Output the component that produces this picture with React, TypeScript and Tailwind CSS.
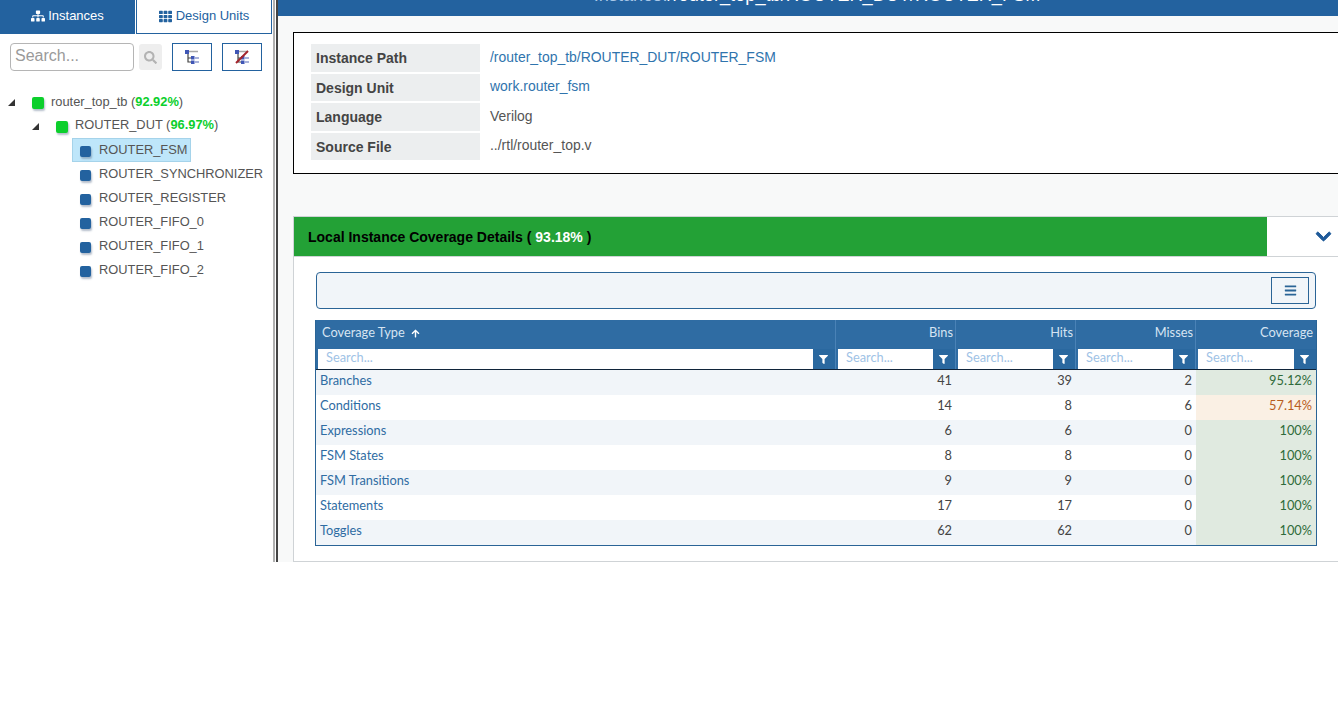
import { FaSitemap, FaTh, FaSearch, FaChevronDown, FaBars, FaFilter, FaArrowUp } from "react-icons/fa";

const treeChildren = ["ROUTER_FSM", "ROUTER_SYNCHRONIZER", "ROUTER_REGISTER", "ROUTER_FIFO_0", "ROUTER_FIFO_1", "ROUTER_FIFO_2"];

const details = [
  { label: "Instance Path", value: "/router_top_tb/ROUTER_DUT/ROUTER_FSM", link: true, row: "h-[28px]", labelPad: "", valuePad: "pt-[3px]" },
  { label: "Design Unit", value: "work.router_fsm", link: true, row: "h-[27px]", labelPad: "pt-[2px]", valuePad: "pt-[2px]" },
  { label: "Language", value: "Verilog", link: false, row: "h-[28px]", labelPad: "", valuePad: "pt-[3px]" },
  { label: "Source File", value: "../rtl/router_top.v", link: false, row: "h-[27px]", labelPad: "pt-[2px]", valuePad: "pt-[2px]" },
];

const rows = [
  { name: "Branches", bins: 41, hits: 39, misses: 2, cov: "95.12%", low: false },
  { name: "Conditions", bins: 14, hits: 8, misses: 6, cov: "57.14%", low: true },
  { name: "Expressions", bins: 6, hits: 6, misses: 0, cov: "100%", low: false },
  { name: "FSM States", bins: 8, hits: 8, misses: 0, cov: "100%", low: false },
  { name: "FSM Transitions", bins: 9, hits: 9, misses: 0, cov: "100%", low: false },
  { name: "Statements", bins: 17, hits: 17, misses: 0, cov: "100%", low: false },
  { name: "Toggles", bins: 62, hits: 62, misses: 0, cov: "100%", low: false },
];

const gridCols = "grid grid-cols-[520px_120px_120px_120px_120px]";

function Toggle() {
  return (
    <svg width="7" height="7" viewBox="0 0 7 7" className="shrink-0">
      <polygon points="7,0 7,7 0,7" fill="#333" />
    </svg>
  );
}

function Node({ green }: { green?: boolean }) {
  return (
    <span
      className={`block rounded-[2px] shrink-0 shadow-[1px_2px_2px_rgba(90,110,140,0.45)] ${
        green ? "w-[12px] h-[12px] bg-[#0ccf2c]" : "w-[11px] h-[11px] bg-[#23629f]"
      }`}
    />
  );
}

function TreeIcon({ crossed }: { crossed?: boolean }) {
  return (
    <svg width="16" height="16" viewBox="0 0 16 16">
      <rect x="1" y="1" width="4" height="4" fill="#3f56b5" />
      <path d="M5 2.5H14" stroke="#a8a8a8" strokeWidth="1.5" />
      <path d="M4 5V13H7M4 9H7" stroke="#444" strokeWidth="1.2" fill="none" />
      <rect x="7" y="7" width="3.5" height="3.5" fill="#3f56b5" />
      <rect x="7" y="11.5" width="3.5" height="3.5" fill="#3f56b5" />
      <path d="M11 9H15M11 13H15" stroke="#8d9bd0" strokeWidth="1.5" />
      {crossed && <path d="M2 14L14 2" stroke="#a3242c" strokeWidth="2" />}
    </svg>
  );
}

function ColumnSearch({ last }: { last?: boolean }) {
  return (
    <div className={`h-[20px] flex pl-[2px] ${last ? "" : "border-r border-[#4a82b6]"}`}>
      <div className="flex-1 bg-white pl-[8px] text-[12.8px] leading-[17px] text-[#9fc3e6]">Search...</div>
      <div className="w-[22px] pr-[2px] bg-[#2a689f] flex items-center justify-center text-white">
        <FaFilter size={9} />
      </div>
    </div>
  );
}

function HeaderCell({ children, last }: { children: React.ReactNode; last?: boolean }) {
  return (
    <div className={`h-[29px] pb-[3px] flex items-center justify-end text-[12.8px] text-[#d6e4f2] ${last ? "pr-[3px]" : "pr-[2px] border-r border-[#4a82b6]"}`}>
      {children}
    </div>
  );
}

export default function App() {
  return (
    <div className="w-[1338px] h-[707px] overflow-hidden bg-white font-['Liberation_Sans',sans-serif]">
      <div className="flex h-[562px]">
        {/* Sidebar */}
        <aside className="w-[272px] shrink-0 h-full">
          <div className="flex h-[34px]">
            <div className="w-[136px] bg-[#23629f] text-white text-[13px] flex items-center justify-center gap-[3px] pb-[2px] border-r border-white">
              <FaSitemap size={14} />
              <span>Instances</span>
            </div>
            <div className="w-[136px] h-[34px] border border-t-0 border-[#23629f] text-[#23629f] text-[13px] flex items-center justify-center gap-[4px] pb-[1px]">
              <FaTh size={13} />
              <span>Design Units</span>
            </div>
          </div>

          <div className="flex items-center pl-[10px] pt-[9px] h-[37px]">
            <div className="w-[124px] h-[28px] border border-[#b5b5b5] rounded-[4px] pl-[4px] text-[16px] leading-[23px] text-[#9a9a9a]">
              Search...
            </div>
            <div className="w-[23px] h-[26px] ml-[5px] bg-[#eeeeee] rounded-[3px] flex items-center justify-center text-[#b3b3b3]">
              <FaSearch size={13} />
            </div>
            <div className="w-[40px] h-[28px] ml-[10px] border border-[#23629f] flex items-center justify-center">
              <TreeIcon />
            </div>
            <div className="w-[40px] h-[28px] ml-[10px] border border-[#23629f] flex items-center justify-center">
              <TreeIcon crossed />
            </div>
          </div>

          <div className="pt-[19px] text-[12.85px] text-[#555]">
            <div className="h-[24px] flex items-center pl-[8px]">
              <Toggle />
              <span className="ml-[17px] mt-[2px]"><Node green /></span>
              <span className="ml-[7px]">
                router_top_tb (<b className="text-[#0ccf2c]">92.92%</b>)
              </span>
            </div>
            <div className="h-[24px] flex items-center pl-[32px]">
              <Toggle />
              <span className="ml-[17px] mt-[2px]"><Node green /></span>
              <span className="ml-[7px] mb-[2px]">
                ROUTER_DUT (<b className="text-[#0ccf2c]">96.97%</b>)
              </span>
            </div>
            {treeChildren.map((name, i) => (
              <div key={name} className="h-[24px] flex items-center pl-[72px]">
                <div
                  className={`h-[24px] flex items-center pl-[7px] pr-[3px] border ${
                    i === 0 ? "bg-[#bee6fa] border-[#a5d3ea]" : "border-transparent"
                  }`}
                >
                  <span className="mt-[3px]"><Node /></span>
                  <span className="ml-[8px]">{name}</span>
                </div>
              </div>
            ))}
          </div>
        </aside>

        {/* Splitter */}
        <div className="w-[5px] ml-px shrink-0 h-full border-l-2 border-r-2 border-l-[#b0b0b0] border-r-[#444] bg-white" />

        {/* Main */}
        <main className="flex-1 min-w-0 h-full bg-[#f8f9f9] overflow-hidden">
          <div className="h-[16px] bg-[#23629f] overflow-hidden flex justify-center pl-[18px]">
            <div className="text-[18.2px] leading-[20px] -mt-[15px] whitespace-nowrap text-white">
              <span className="text-[#a9c8e8]">Instance:</span>/router_top_tb/ROUTER_DUT/ROUTER_FSM
            </div>
          </div>

          <div className="mt-[16px] ml-[15px] -mr-[10px] h-[142px] border border-black bg-white pl-[17px] pt-[11px]">
            {details.map((d) => (
              <div key={d.label} className={`flex mb-[2px] ${d.row}`}>
                <div className={`w-[169px] bg-[#eceeef] pl-[5px] text-[14px] font-bold text-[#444] flex items-center ${d.labelPad}`}>
                  {d.label}
                </div>
                <div className={`pl-[10px] text-[13.95px] ${d.valuePad} ${d.link ? "text-[#2f74ad]" : "text-[#555]"}`}>
                  {d.value}
                </div>
              </div>
            ))}
          </div>

          <section className="mt-[42px] ml-[15px] -mr-[10px] h-[346px] bg-white border border-[#cfd3d6]">
            <div className="flex h-[39px]">
              <div className="w-[973px] bg-[#23a136] flex items-center pl-[14px] pt-px text-[14px] font-bold text-black">
                Local Instance Coverage Details (
                <span className="text-white text-[14px] mx-[4px]">93.18%</span>)
              </div>
              <div className="flex-1 flex items-center pl-[48px] text-[#1f5a99]">
                <FaChevronDown size={17} stroke="currentColor" strokeWidth={30} />
              </div>
            </div>

            <div className="h-px bg-[#cfd3d6]" />

            <div className="pl-[21px] pt-[15px] font-['Lato',sans-serif]">
              <div className="w-[1000px] ml-px h-[37px] bg-[#f1f5f9] border border-[#2a6496] rounded-[4px] flex items-center justify-end pr-[6px]">
                <div className="w-[38px] h-[27px] border border-[#2a6496] flex items-center justify-center text-[#2a6496]">
                  <FaBars size={13} />
                </div>
              </div>

              <div className="w-[1002px] mt-[11px] border border-t-0 border-[#2a6496]">
                <div className={`${gridCols} bg-[#2f6ca3] border-b border-[#10243a]`}>
                  <div className="h-[29px] pb-[3px] flex items-center pl-[6px] gap-[6px] text-[12.8px] text-[#d6e4f2] border-r border-[#4a82b6]">
                    <span>Coverage Type</span>
                    <FaArrowUp size={9} className="text-white" />
                  </div>
                  <HeaderCell>Bins</HeaderCell>
                  <HeaderCell>Hits</HeaderCell>
                  <HeaderCell>Misses</HeaderCell>
                  <HeaderCell last>Coverage</HeaderCell>
                  <ColumnSearch />
                  <ColumnSearch />
                  <ColumnSearch />
                  <ColumnSearch />
                  <ColumnSearch last />
                </div>

                {rows.map((r, i) => (
                  <div
                    key={r.name}
                    className={`${gridCols} h-[25px] text-[12.8px] leading-[21px] text-[#444] ${i % 2 === 0 ? "bg-[#f1f5f9]" : "bg-white"}`}
                  >
                    <div className="pl-[4px] text-[#2f6ca3]">{r.name}</div>
                    <div className="text-right pr-[4px]">{r.bins}</div>
                    <div className="text-right pr-[4px]">{r.hits}</div>
                    <div className="text-right pr-[4px]">{r.misses}</div>
                    <div className={`text-right pr-[4px] ${r.low ? "bg-[#faf0e4] text-[#b85c1e]" : "bg-[#e0eae0] text-[#2f6b3a]"}`}>
                      {r.cov}
                    </div>
                  </div>
                ))}
              </div>
            </div>
          </section>
        </main>
      </div>
    </div>
  );
}
